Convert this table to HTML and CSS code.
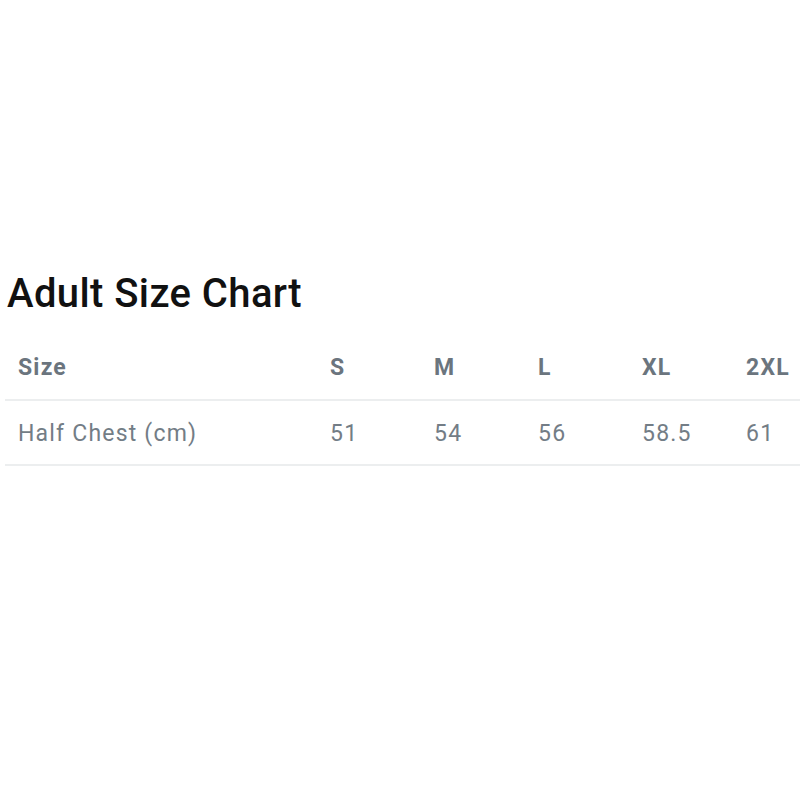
FILE: index.html
```html
<!DOCTYPE html>
<html>
<head>
<meta charset="utf-8">
<link rel="stylesheet" href="styles.css">
</head>
<body>
<main class="page">
  <h1 class="title">Adult Size Chart</h1>
  <table class="chart">
    <thead>
      <tr>
        <th class="label">Size</th>
        <th>S</th>
        <th>M</th>
        <th>L</th>
        <th>XL</th>
        <th>2XL</th>
      </tr>
    </thead>
    <tbody>
      <tr>
        <td class="label">Half Chest (cm)</td>
        <td>51</td>
        <td>54</td>
        <td>56</td>
        <td>58.5</td>
        <td>61</td>
      </tr>
    </tbody>
  </table>
</main>
</body>
</html>
```

FILE: styles.css
```css
html, body {
  margin: 0;
  padding: 0;
  background: #ffffff;
  overflow: hidden;
}
.page {
  padding: 267px 0 0 5px;
  font-family: Roboto, "Liberation Sans", sans-serif;
}
.title {
  margin: 1px 0 0 2px;
  font-size: 40px;
  font-weight: 500;
  letter-spacing: 0.4px;
  color: #111111;
  line-height: 52px;
}
.chart {
  margin-top: 16px;
  border-collapse: collapse;
  table-layout: fixed;
  width: 832px;
}
.chart th, .chart td {
  width: 91px;
  padding: 0 0 0 13px;
  text-align: left;
  font-size: 23px;
  letter-spacing: 1.2px;
  color: #737d86;
  border-bottom: 2px solid #eceeef;
  white-space: nowrap;
}
.chart th {
  height: 63px;
  font-weight: 700;
  color: #6b757e;
}
.chart td {
  height: 61px;
  padding-top: 2px;
  font-weight: 400;
}
.chart .label {
  width: 299px;
}
```
